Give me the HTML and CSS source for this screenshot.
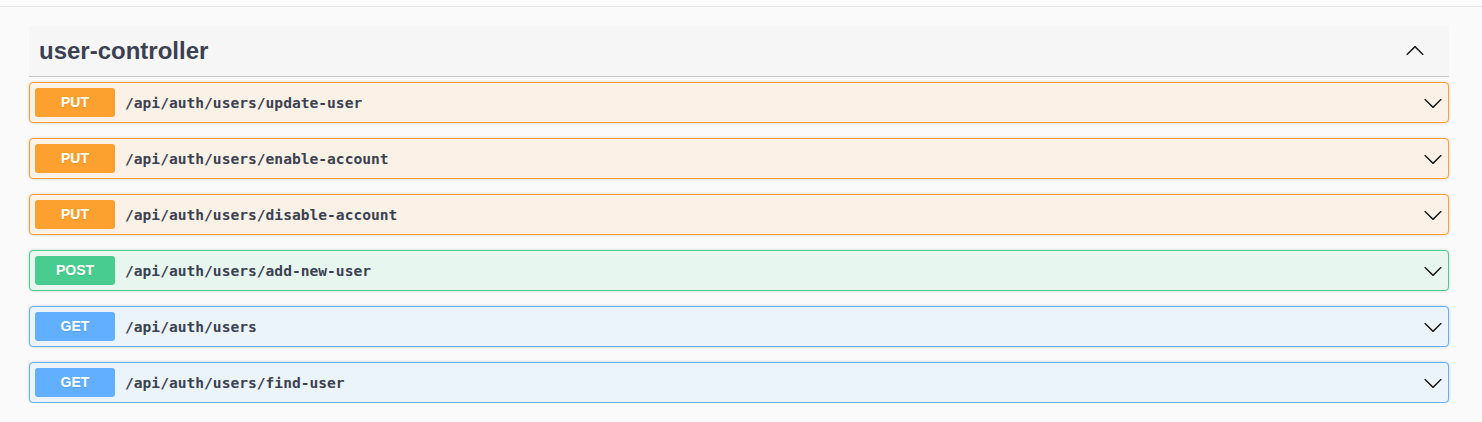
FILE: index.html
```html
<!DOCTYPE html>
<html>
<head>
<meta charset="utf-8">
<link rel="stylesheet" href="styles.css">
</head>
<body>
<div class="topbar"></div>
<div class="wrapper">
  <div class="tag-section">
    <h3 class="tag-header">
      <span class="tag-name">user-controller</span>
      <svg class="chev" viewBox="0 0 20 20" width="20" height="20"><path d="M17.418 13.891c.272.268.709.268.979 0s.271-.701 0-.969l-7.908-7.83c-.27-.268-.707-.268-.979 0l-7.908 7.83c-.27.268-.27.701 0 .969.271.268.709.268.979 0L10 6.75l7.418 7.141z"/></svg>
    </h3>
    <div class="ops">
      <div class="op op-put"><span class="method">PUT</span><span class="path">/api/auth/users/update-user</span><svg class="chev" viewBox="0 0 20 20" width="20" height="20"><path d="M17.418 6.109c.272-.268.709-.268.979 0s.271.701 0 .969l-7.908 7.83c-.27.268-.707.268-.979 0l-7.908-7.83c-.27-.268-.27-.701 0-.969.271-.268.709-.268.979 0L10 13.25l7.418-7.141z"/></svg></div>
      <div class="op op-put"><span class="method">PUT</span><span class="path">/api/auth/users/enable-account</span><svg class="chev" viewBox="0 0 20 20" width="20" height="20"><path d="M17.418 6.109c.272-.268.709-.268.979 0s.271.701 0 .969l-7.908 7.83c-.27.268-.707.268-.979 0l-7.908-7.83c-.27-.268-.27-.701 0-.969.271-.268.709-.268.979 0L10 13.25l7.418-7.141z"/></svg></div>
      <div class="op op-put"><span class="method">PUT</span><span class="path">/api/auth/users/disable-account</span><svg class="chev" viewBox="0 0 20 20" width="20" height="20"><path d="M17.418 6.109c.272-.268.709-.268.979 0s.271.701 0 .969l-7.908 7.83c-.27.268-.707.268-.979 0l-7.908-7.83c-.27-.268-.27-.701 0-.969.271-.268.709-.268.979 0L10 13.25l7.418-7.141z"/></svg></div>
      <div class="op op-post"><span class="method">POST</span><span class="path">/api/auth/users/add-new-user</span><svg class="chev" viewBox="0 0 20 20" width="20" height="20"><path d="M17.418 6.109c.272-.268.709-.268.979 0s.271.701 0 .969l-7.908 7.83c-.27.268-.707.268-.979 0l-7.908-7.83c-.27-.268-.27-.701 0-.969.271-.268.709-.268.979 0L10 13.25l7.418-7.141z"/></svg></div>
      <div class="op op-get"><span class="method">GET</span><span class="path">/api/auth/users</span><svg class="chev" viewBox="0 0 20 20" width="20" height="20"><path d="M17.418 6.109c.272-.268.709-.268.979 0s.271.701 0 .969l-7.908 7.83c-.27.268-.707.268-.979 0l-7.908-7.83c-.27-.268-.27-.701 0-.969.271-.268.709-.268.979 0L10 13.25l7.418-7.141z"/></svg></div>
      <div class="op op-get"><span class="method">GET</span><span class="path">/api/auth/users/find-user</span><svg class="chev" viewBox="0 0 20 20" width="20" height="20"><path d="M17.418 6.109c.272-.268.709-.268.979 0s.271.701 0 .969l-7.908 7.83c-.27.268-.707.268-.979 0l-7.908-7.83c-.27-.268-.27-.701 0-.969.271-.268.709-.268.979 0L10 13.25l7.418-7.141z"/></svg></div>
    </div>
  </div>
</div>
</body>
</html>
```
FILE: styles.css
```css
html, body {
  margin: 0;
  padding: 0;
}
body {
  background: #fafafa;
  font-family: "Liberation Sans", Arial, sans-serif;
  color: #3b4151;
}
.topbar {
  height: 6px;
  background: #fdfdfd;
  border-bottom: 1px solid #e4e4e4;
}
.wrapper {
  padding: 19px 33px 0 29px;
}
.tag-header {
  margin: 0 0 5px;
  padding: 10px 24px 10px 10px;
  height: 30px;
  display: flex;
  align-items: center;
  justify-content: space-between;
  background: #f6f6f6;
  border-bottom: 1px solid #c8c9cc;
}
.tag-name {
  font-size: 24px;
  font-weight: bold;
  line-height: 30px;
  color: #3b4151;
}
.chev {
  flex: none;
  fill: #1b1b1b;
}
.ops {
  display: flex;
  flex-direction: column;
  gap: 15px;
}
.op {
  display: flex;
  align-items: center;
  padding: 5px;
  border: 1px solid;
  border-radius: 4px;
  box-shadow: 0 0 3px rgba(0, 0, 0, 0.19);
}
.method {
  flex: none;
  width: 80px;
  padding: 6px 0;
  text-align: center;
  font-size: 14px;
  line-height: 17px;
  font-weight: bold;
  color: #fff;
  border-radius: 3px;
  text-shadow: 0 1px 0 rgba(0, 0, 0, 0.1);
}
.path {
  flex: 1;
  padding: 0 10px;
  font-family: "DejaVu Sans Mono", monospace;
  font-size: 14.6px;
  font-weight: bold;
  color: #3b4151;
}
.op-put {
  border-color: #fca130;
  background: #fcf1e6;
}
.op-put .method { background: #fca130; }
.op-post {
  border-color: #49cc90;
  background: #e8f6f0;
}
.op-post .method { background: #49cc90; }
.op-get {
  border-color: #61affe;
  background: #ebf3fb;
}
.op-get .method { background: #61affe; }
```
